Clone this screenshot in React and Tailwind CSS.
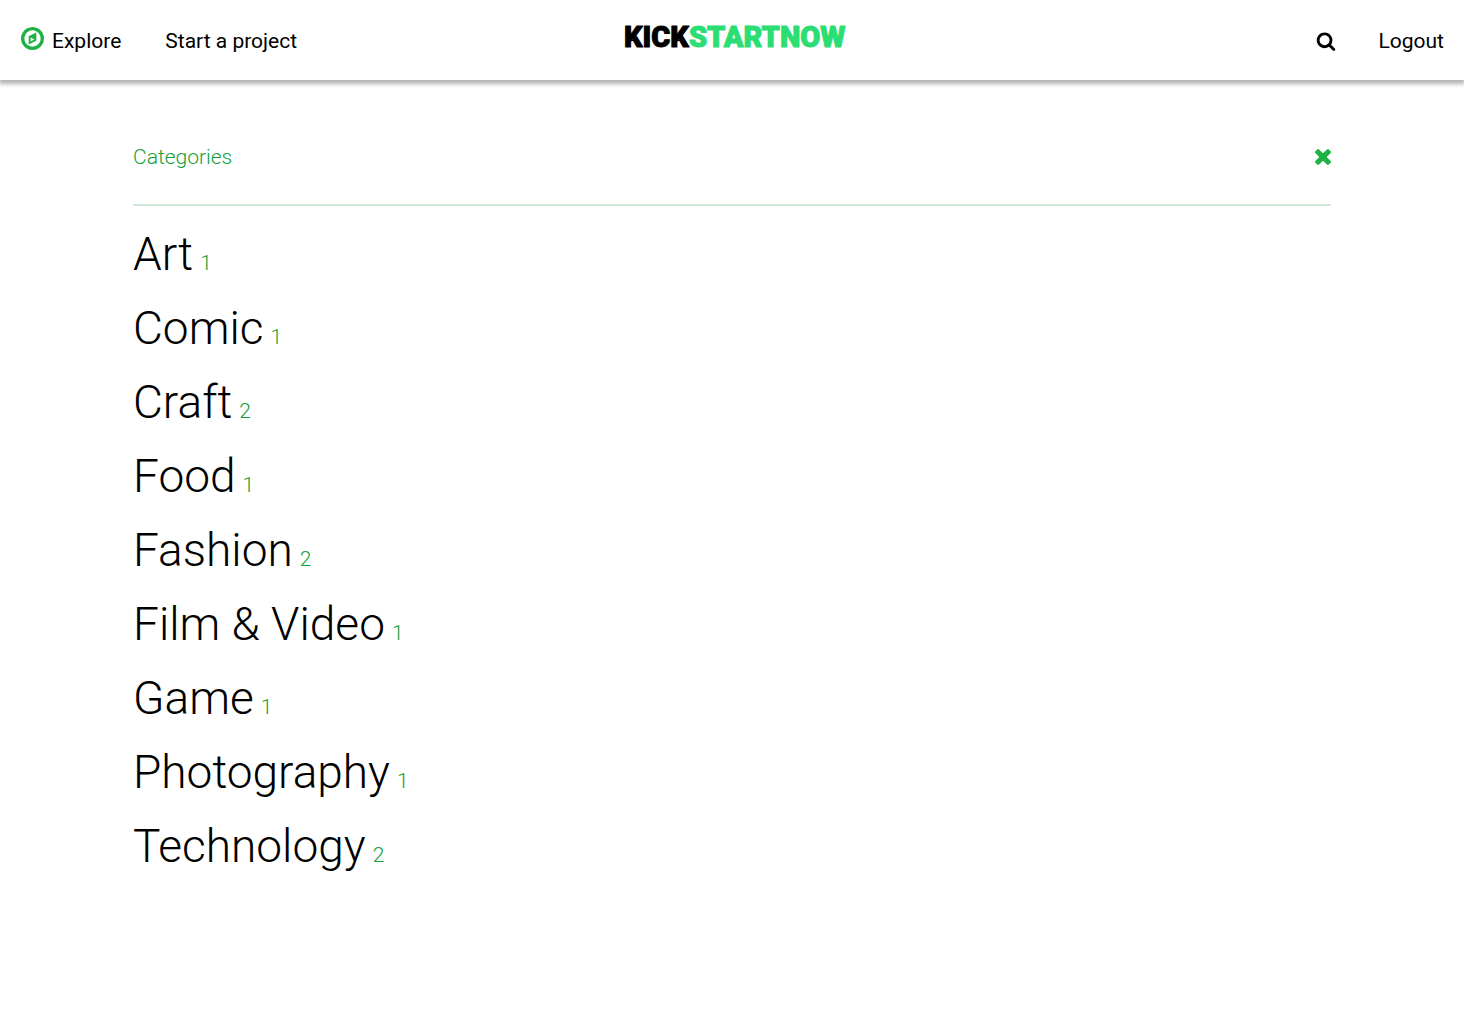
import React from "react";

const categories = [
  { name: "Art", count: 1 },
  { name: "Comic", count: 1 },
  { name: "Craft", count: 2 },
  { name: "Food", count: 1 },
  { name: "Fashion", count: 2 },
  { name: "Film & Video", count: 1 },
  { name: "Game", count: 1 },
  { name: "Photography", count: 1 },
  { name: "Technology", count: 2 },
];

function CompassIcon() {
  return (
    <svg viewBox="0 0 1536 1536" className="size-[23px] text-[#1db146]" fill="currentColor" aria-hidden="true">
      <path
        transform="translate(0 1408) scale(1 -1)"
        d="M640 448l256 128l-256 128v-256zM1024 1039v-542l-512 -256v542zM1312 640q0 148 -73 273t-198 198t-273 73t-273 -73t-198 -198t-73 -273t73 -273t198 -198t273 -73t273 73t198 198t73 273zM1536 640q0 -209 -103 -385.5t-279.5 -279.5t-385.5 -103t-385.5 103t-279.5 279.5t-103 385.5t103 385.5t279.5 279.5t385.5 103t385.5 -103t279.5 -279.5t103 -385.5z"
      />
    </svg>
  );
}

function SearchIcon() {
  return (
    <svg viewBox="0 0 1792 1792" className="size-5" fill="currentColor" aria-hidden="true">
      <path d="M1216 832q0-185-131.5-316.5t-316.5-131.5-316.5 131.5-131.5 316.5 131.5 316.5 316.5 131.5 316.5-131.5 131.5-316.5zm512 832q0 52-38 90t-90 38q-54 0-90-38l-343-342q-179 124-399 124-143 0-273.5-55.5t-225-150-150-225-55.5-273.5 55.5-273.5 150-225 225-150 273.5-55.5 273.5 55.5 225 150 150 225 55.5 273.5q0 220-124 399l343 343q37 37 37 90z" />
    </svg>
  );
}

function CloseIcon() {
  return (
    <svg viewBox="302 366 1188 1188" className="size-4" fill="currentColor" aria-hidden="true">
      <path d="M1490 1322q0 40-28 68l-136 136q-28 28-68 28t-68-28l-294-294-294 294q-28 28-68 28t-68-28l-136-136q-28-28-28-68t28-68l294-294-294-294q-28-28-28-68t28-68l136-136q28-28 68-28t68 28l294 294 294-294q28-28 68-28t68 28l136 136q28 28 28 68t-28 68l-294 294 294 294q28 28 28 68z" />
    </svg>
  );
}

function Logo() {
  return (
    <svg viewBox="0 0 232 40" className="h-10 w-[232px] font-['Roboto',sans-serif] text-[29px] font-black" role="img" aria-label="KickStartNow">
      <text x="7" y="31" fill="#000" stroke="#000" strokeWidth="1" strokeLinejoin="round">
        KICK<tspan fill="#2bde73" stroke="#2bde73">STARTNOW</tspan>
      </text>
    </svg>
  );
}

export default function App() {
  return (
    <div className="min-h-screen bg-white font-['Roboto',sans-serif] text-black">
      <header className="grid h-20 grid-cols-[1fr_auto_1fr] items-center pr-5 pl-[21px] text-[21px] leading-6 shadow-[0_3px_4px_1px_rgba(0,0,0,0.3)]">
        <nav className="flex items-center gap-11 pt-0.5">
          <a href="#explore" className="flex items-center gap-2">
            <span className="pb-1.5">
              <CompassIcon />
            </span>
            Explore
          </a>
          <a href="#start">Start a project</a>
        </nav>
        <a href="#home" className="pb-2">
          <Logo />
        </a>
        <div className="flex items-center justify-end gap-[42px] pt-0.5">
          <button type="button" aria-label="Search" className="cursor-pointer">
            <SearchIcon />
          </button>
          <button type="button" className="cursor-pointer">
            Logout
          </button>
        </div>
      </header>

      <main className="mx-auto w-full max-w-[1198px] pt-16">
        <div className="flex items-center justify-between border-b-2 border-[#cfe8d8] pb-[34px] text-[#12a03a]">
          <h1 className="text-[21px] leading-[26px] font-light">Categories</h1>
          <button type="button" aria-label="Close" className="cursor-pointer text-[#1db146]">
            <CloseIcon />
          </button>
        </div>
        <ul className="pt-[11px] font-light">
          {categories.map((c) => (
            <li key={c.name} className="h-[74px]">
              <a href={"#" + c.name} className="inline-flex items-baseline gap-[7px] leading-[74px]">
                <span className="text-[46px]">{c.name}</span>
                <span className="text-[21px] text-[#12a03a]">{c.count}</span>
              </a>
            </li>
          ))}
        </ul>
      </main>
    </div>
  );
}
